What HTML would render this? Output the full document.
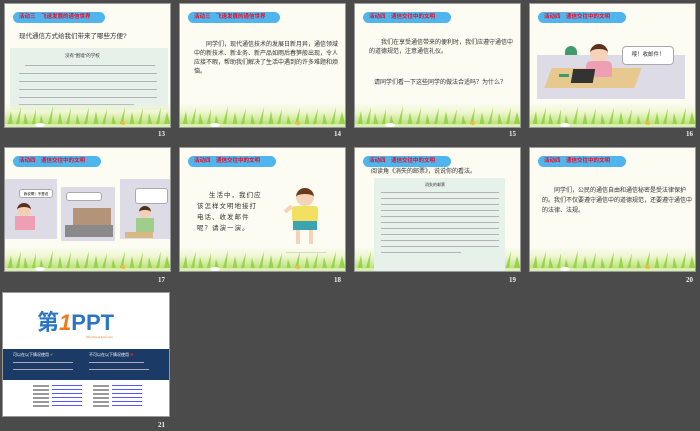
<!DOCTYPE html>
<html><head><meta charset="utf-8">
<style>
*{margin:0;padding:0;box-sizing:border-box}
body{width:700px;height:431px;background:#4b4b4b;position:relative;overflow:hidden;font-family:"Liberation Sans","Noto Sans CJK SC",sans-serif}
.s{position:absolute;width:167px;height:125px;background:#fcfcf2;overflow:hidden;border:1px solid #999}
.g{position:absolute;left:0;right:0;bottom:0;height:24px;background:linear-gradient(to bottom,rgba(255,255,255,0),#eef6cf 40%,#c4e58a 80%,#b5dc77)}
.g svg{position:absolute;left:0;bottom:0;width:167px;height:24px}
.n{position:absolute;color:#eee;font-size:7px;font-weight:bold;font-family:"Liberation Serif",serif}
.p{position:absolute;left:8px;top:8px;height:11px;border-radius:6px;background:#4fb5ec;color:#e8102a;font-size:5.5px;font-weight:bold;line-height:11px;padding:0 6px;white-space:nowrap}
.t{position:absolute;font-size:6px;color:#333;line-height:9px}
.box{position:absolute;background:#e6f1ea}
.ln{position:absolute;height:1px;background:#999;opacity:.7}
</style></head><body>
<svg width="0" height="0" style="position:absolute">
<defs><symbol id="gr" viewBox="0 0 167 24">
<g fill="#8fcf3f" opacity=".85">
<path d="M2 24L6 8L8 24ZM10 24L16 4L14 24ZM18 24L20 10L24 24ZM26 24L31 6L30 24ZM34 24L36 12L40 24ZM42 24L48 3L46 24ZM52 24L55 9L58 24ZM60 24L66 5L64 24ZM70 24L72 11L76 24ZM78 24L84 4L82 24ZM88 24L91 8L94 24ZM96 24L102 6L100 24ZM106 24L108 12L112 24ZM114 24L120 4L118 24ZM124 24L127 9L130 24ZM132 24L138 5L136 24ZM142 24L144 10L148 24ZM150 24L156 4L154 24ZM158 24L162 9L166 24Z"/>
</g>
<rect x="0" y="21" width="167" height="3" fill="#d8efb0"/>
<circle cx="118" cy="20" r="2" fill="#f7b93a"/><ellipse cx="35" cy="22" rx="5" ry="2" fill="#fff"/>
</symbol></defs></svg>

<!-- 13 -->
<div class="s" style="left:4px;top:3px">
 <div class="p" style="width:92px">活动三　飞速发展的通信世界</div>
 <div class="t" style="left:14px;top:28px;font-size:6.5px">现代通信方式给我们带来了哪些方便?</div>
 <div class="box" style="left:5px;top:44px;width:158px;height:62px"></div>
 <div class="t" style="left:60px;top:47px;font-size:4.5px">没有"围墙"的学校</div>
 <div class="ln" style="left:20px;top:61px;width:130px"></div>
 <div class="ln" style="left:14px;top:69px;width:138px"></div>
 <div class="ln" style="left:14px;top:77px;width:138px"></div>
 <div class="ln" style="left:14px;top:85px;width:138px"></div>
 <div class="ln" style="left:14px;top:93px;width:138px"></div>
 <div class="ln" style="left:14px;top:100px;width:115px"></div>
 <div class="g"><svg><use href="#gr"/></svg></div>
</div>
<div class="n" style="left:158px;top:130px">13</div>

<!-- 14 -->
<div class="s" style="left:179px;top:3px">
 <div class="p" style="width:92px">活动三　飞速发展的通信世界</div>
 <div class="t" style="left:14px;top:37px;width:145px;text-indent:12px">同学们，现代通信技术的发展日新月异，通信领域中的新技术、新业务、新产品如雨后春笋般出现，令人应接不暇，帮助我们解决了生活中遇到的许多难题和烦恼。</div>
 <div class="g"><svg><use href="#gr"/></svg></div>
</div>
<div class="n" style="left:334px;top:130px">14</div>

<!-- 15 -->
<div class="s" style="left:354px;top:3px">
 <div class="p" style="width:88px">活动四　通信交往中的文明</div>
 <div class="t" style="left:14px;top:35px;width:148px;text-indent:12px">我们在享受通信带来的便利时，我们应遵守通信中的道德规范，注意通信礼仪。</div>
 <div class="t" style="left:19px;top:75px;width:148px">请同学们看一下这些同学的做法合适吗？为什么？</div>
 <div class="g"><svg><use href="#gr"/></svg></div>
</div>
<div class="n" style="left:509px;top:130px">15</div>

<!-- 16 -->
<div class="s" style="left:529px;top:3px">
 <div class="p" style="width:88px">活动四　通信交往中的文明</div>
 <div style="position:absolute;left:7px;top:51px;width:148px;height:44px;background:#dcdbe6"></div>
 <div style="position:absolute;left:18px;top:64px;width:90px;height:20px;background:#e7c98f;transform:skewX(-20deg)"></div>
 <div style="position:absolute;left:60px;top:40px;width:18px;height:18px;border-radius:50%;background:#f6d2b6;border-top:5px solid #5a3020"></div>
 <div style="position:absolute;left:56px;top:57px;width:26px;height:16px;background:#ee9fb3;border-radius:5px 5px 0 0"></div>
 <div style="position:absolute;left:42px;top:65px;width:22px;height:14px;background:#333;transform:skewX(-10deg)"></div>
 <div style="position:absolute;left:35px;top:42px;width:12px;height:9px;background:#3f9a6c;border-radius:6px 6px 0 0"></div>
 <div style="position:absolute;left:29px;top:70px;width:10px;height:3px;background:#3f9a6c"></div>
 <div style="position:absolute;left:92px;top:42px;width:52px;height:19px;background:#fff;border:1px solid #aaa;border-radius:4px;font-size:5.5px;line-height:17px;text-align:center;color:#333">喂！收邮件！</div>
 <div class="g"><svg><use href="#gr"/></svg></div>
</div>
<div class="n" style="left:686px;top:130px">16</div>

<!-- 17 -->
<div class="s" style="left:4px;top:147px">
 <div class="p" style="width:88px">活动四　通信交往中的文明</div>
 <div style="position:absolute;left:0;top:31px;width:52px;height:60px;background:#dcdbe6"></div>
 <div style="position:absolute;left:56px;top:39px;width:54px;height:54px;background:#dcdbe6"></div>
 <div style="position:absolute;left:115px;top:31px;width:52px;height:60px;background:#dcdbe6"></div>
 <div style="position:absolute;left:14px;top:41px;width:34px;height:9px;background:#fff;border:1px solid #aaa;border-radius:3px;font-size:3.5px;line-height:8px;text-align:center">我说啊！不是说</div>
 <div style="position:absolute;left:61px;top:44px;width:36px;height:9px;background:#fff;border:1px solid #aaa;border-radius:3px"></div>
 <div style="position:absolute;left:130px;top:40px;width:33px;height:16px;background:#fff;border:1px solid #aaa;border-radius:3px"></div>
 <div style="position:absolute;left:12px;top:55px;width:14px;height:14px;border-radius:50%;background:#f3cfb4;border-top:4px solid #5a3020"></div>
 <div style="position:absolute;left:10px;top:68px;width:20px;height:14px;background:#ee9fb3"></div>
 <div style="position:absolute;left:68px;top:60px;width:38px;height:18px;background:#b49478"></div>
 <div style="position:absolute;left:60px;top:77px;width:48px;height:12px;background:#8a8a8a"></div>
 <div style="position:absolute;left:134px;top:58px;width:12px;height:12px;border-radius:50%;background:#f3cfb4;border-top:4px solid #4a3020"></div>
 <div style="position:absolute;left:131px;top:70px;width:18px;height:14px;background:#9fce8a"></div>
 <div style="position:absolute;left:120px;top:84px;width:28px;height:6px;background:#d9b888"></div>
 <div class="g"><svg><use href="#gr"/></svg></div>
</div>
<div class="n" style="left:158px;top:276px">17</div>

<!-- 18 -->
<div class="s" style="left:179px;top:147px">
 <div class="p" style="width:88px">活动四　通信交往中的文明</div>
 <div class="t" style="left:17px;top:42px;width:66px;font-size:6.5px;line-height:11px;letter-spacing:1px;text-indent:12px">生活中，我们应该怎样文明地接打电话、收发邮件呢？请演一演。</div>
 <div style="position:absolute;left:116px;top:40px;width:18px;height:18px;border-radius:50%;background:#f6d2b6;border-top:6px solid #6a3a1a"></div>
 <div style="position:absolute;left:112px;top:58px;width:26px;height:16px;background:#f4e060;border-radius:3px"></div>
 <div style="position:absolute;left:113px;top:73px;width:24px;height:9px;background:#3aa5b0"></div>
 <div style="position:absolute;left:116px;top:82px;width:4px;height:14px;background:#f6d2b6"></div>
 <div style="position:absolute;left:129px;top:82px;width:4px;height:14px;background:#f6d2b6"></div>
 <div style="position:absolute;left:104px;top:59px;width:9px;height:4px;background:#f6d2b6;transform:rotate(-40deg)"></div>
 <div class="ln" style="left:106px;top:104px;width:40px"></div>
 <div class="g"><svg><use href="#gr"/></svg></div>
</div>
<div class="n" style="left:334px;top:276px">18</div>

<!-- 19 -->
<div class="s" style="left:354px;top:147px">
 <div class="p" style="width:88px">活动四　通信交往中的文明</div>
 <div class="t" style="left:16px;top:20px">阅读角《消失的邮票》，说说你的看法。</div>
 <div class="g"><svg><use href="#gr"/></svg></div>
 <div class="box" style="left:19px;top:30px;width:131px;height:95px"></div>
 <div class="t" style="left:70px;top:32px;font-size:4px">消失的邮票</div>
 <div class="ln" style="left:26px;top:44px;width:118px"></div>
 <div class="ln" style="left:26px;top:50px;width:118px"></div>
 <div class="ln" style="left:26px;top:56px;width:118px"></div>
 <div class="ln" style="left:26px;top:62px;width:118px"></div>
 <div class="ln" style="left:26px;top:68px;width:118px"></div>
 <div class="ln" style="left:26px;top:74px;width:118px"></div>
 <div class="ln" style="left:26px;top:80px;width:118px"></div>
 <div class="ln" style="left:26px;top:86px;width:118px"></div>
 <div class="ln" style="left:26px;top:92px;width:118px"></div>
 <div class="ln" style="left:26px;top:98px;width:118px"></div>
 <div class="ln" style="left:26px;top:104px;width:80px"></div>
</div>
<div class="n" style="left:509px;top:276px">19</div>

<!-- 20 -->
<div class="s" style="left:529px;top:147px">
 <div class="p" style="width:88px">活动四　通信交往中的文明</div>
 <div class="t" style="left:12px;top:38px;width:152px;line-height:10px;text-indent:12px">同学们，公民的通信自由和通信秘密是受法律保护的。我们不仅要遵守通信中的道德规范，还要遵守通信中的法律、法规。</div>
 <div class="g"><svg><use href="#gr"/></svg></div>
</div>
<div class="n" style="left:686px;top:276px">20</div>

<!-- 21 -->
<div class="s" style="left:2px;top:292px;width:168px;background:#fff">
 <div style="position:absolute;left:34px;top:18px;font-size:22px;font-weight:bold;color:#2c74c4;line-height:24px">第<span style="color:#f07a1a;font-style:italic">1</span>PPT</div>
 <div style="position:absolute;left:83px;top:42px;font-size:3px;color:#f07a1a">http://www.1ppt.com</div>
 <div style="position:absolute;left:0;top:56px;width:168px;height:31px;background:#1b3a66"></div>
 <div style="position:absolute;left:10px;top:59px;font-size:4px;color:#fff">可以在以下情况使用 <span style="color:#6c2">✔</span></div>
 <div style="position:absolute;left:86px;top:59px;font-size:4px;color:#fff">不可以在以下情况使用 <span style="color:#e22">✖</span></div>
 <div style="position:absolute;left:10px;top:69px;width:60px;height:1px;background:#aab"></div>
 <div style="position:absolute;left:10px;top:76px;width:60px;height:1px;background:#aab"></div>
 <div style="position:absolute;left:86px;top:69px;width:55px;height:1px;background:#aab"></div>
 <div style="position:absolute;left:86px;top:76px;width:60px;height:1px;background:#aab"></div>
 <div style="position:absolute;left:30px;top:92px;width:16px;height:24px;background:repeating-linear-gradient(#999 0 2px,#fff 2px 4px)"></div>
 <div style="position:absolute;left:49px;top:92px;width:30px;height:24px;background:repeating-linear-gradient(#55f 0 1px,#fff 1px 4px)"></div>
 <div style="position:absolute;left:90px;top:92px;width:16px;height:24px;background:repeating-linear-gradient(#999 0 2px,#fff 2px 4px)"></div>
 <div style="position:absolute;left:109px;top:92px;width:30px;height:24px;background:repeating-linear-gradient(#55f 0 1px,#fff 1px 4px)"></div>
</div>
<div class="n" style="left:158px;top:421px">21</div>

</body></html>
